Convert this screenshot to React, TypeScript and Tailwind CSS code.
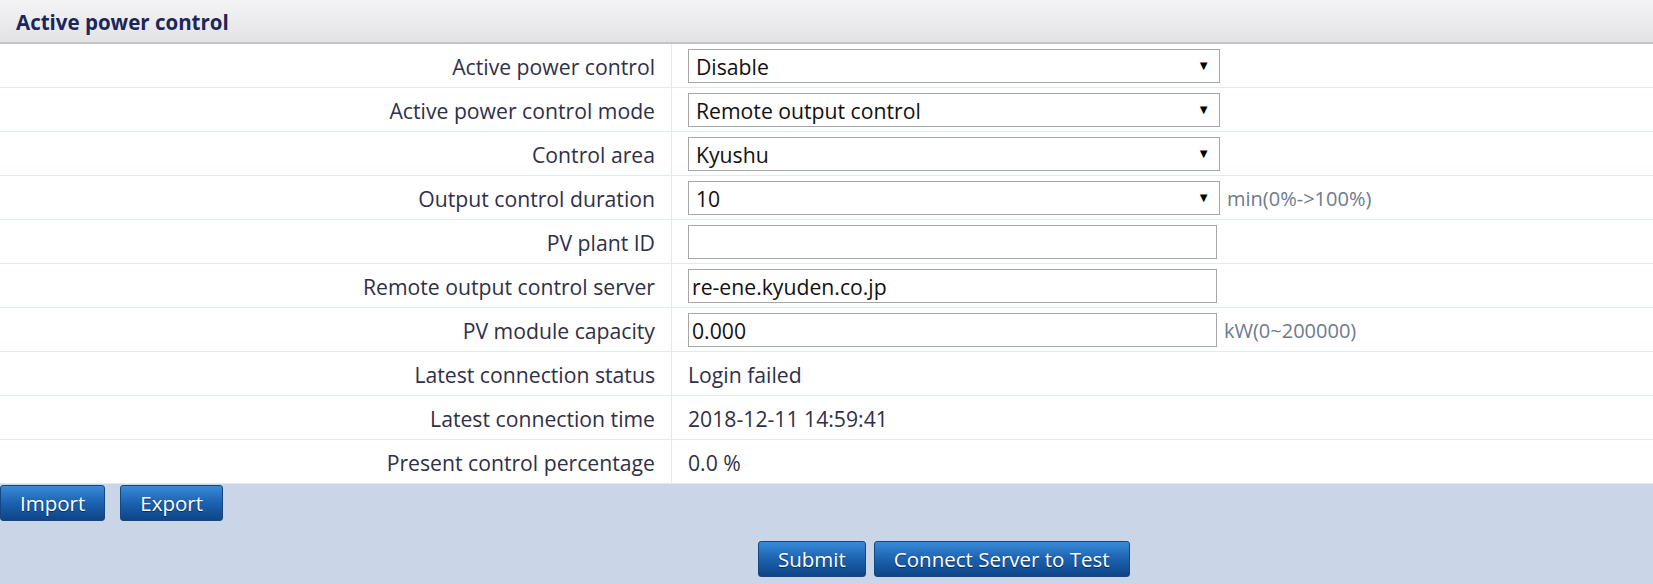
import React from 'react';

type Row = {
  label: string;
  kind: 'select' | 'input' | 'text';
  value: string;
  unit?: string;
};

const rows: Row[] = [
  { label: 'Active power control', kind: 'select', value: 'Disable' },
  { label: 'Active power control mode', kind: 'select', value: 'Remote output control' },
  { label: 'Control area', kind: 'select', value: 'Kyushu' },
  { label: 'Output control duration', kind: 'select', value: '10', unit: 'min(0%->100%)' },
  { label: 'PV plant ID', kind: 'input', value: '' },
  { label: 'Remote output control server', kind: 'input', value: 're-ene.kyuden.co.jp' },
  { label: 'PV module capacity', kind: 'input', value: '0.000', unit: 'kW(0~200000)' },
  { label: 'Latest connection status', kind: 'text', value: 'Login failed' },
  { label: 'Latest connection time', kind: 'text', value: '2018-12-11 14:59:41' },
  { label: 'Present control percentage', kind: 'text', value: '0.0 %' },
];

const font = { fontFamily: '"Open Sans", "Noto Sans", Arial, sans-serif' };

function BlueButton({ children }: { children: React.ReactNode }) {
  return (
    <button className="h-[36px] px-[19px] rounded-[3px] border border-[#15467f] bg-gradient-to-b from-[#3a8ad8] via-[#1c62b0] to-[#0e4586] text-white text-[20.5px] leading-none [text-shadow:0_1px_1px_rgba(0,0,0,0.5)]">
      {children}
    </button>
  );
}

function Field({ row }: { row: Row }) {
  if (row.kind === 'select') {
    return (
      <div className="flex items-center w-[532px] h-[34px] border border-[#a6a6a6] bg-white pl-[7px] pr-[9px] text-[21.2px] text-[#111]">
        <span className="flex-1 pt-[3px]">{row.value}</span>
        <span className="text-[13px] text-black">▼</span>
      </div>
    );
  }
  if (row.kind === 'input') {
    return (
      <div className="flex items-center w-[529px] h-[34px] border border-[#a6a6a6] bg-white pl-[3px] pt-[3px] text-[21.2px] text-[#111]">
        {row.value}
      </div>
    );
  }
  return <span className="pt-[3px] text-[21.2px] text-[#2f3049]">{row.value}</span>;
}

export default function App() {
  return (
    <div className="w-[1653px] h-[584px] flex flex-col bg-[#cbd5e8] overflow-hidden" style={font}>
      <div className="h-[44px] shrink-0 flex items-center pl-4 pt-[3px] bg-gradient-to-b from-[#f4f4f6] to-[#e3e3e6] border-b-2 border-[#c4c4c6]">
        <span className="text-[20.5px] font-bold text-[#1c2659]">Active power control</span>
      </div>

      <div className="bg-white">
        {rows.map((row) => (
          <div key={row.label} className="flex h-[44px] border-b border-[#e2eaea]">
            <div className="w-[672px] shrink-0 flex items-center justify-end pr-[16px] pt-[3px] border-r border-[#e2eaea] text-[21.2px] text-[#2f3049]">
              {row.label}
            </div>
            <div className="flex-1 flex items-center pl-4 gap-[7px]">
              <Field row={row} />
              {row.unit && <span className="pt-[3px] text-[20px] text-[#6d7b8c]">{row.unit}</span>}
            </div>
          </div>
        ))}
      </div>

      <div className="flex gap-[15px] pt-[1px]">
        <BlueButton>Import</BlueButton>
        <BlueButton>Export</BlueButton>
      </div>

      <div className="flex gap-[8px] pl-[758px] pt-[20px]">
        <BlueButton>Submit</BlueButton>
        <BlueButton>Connect Server to Test</BlueButton>
      </div>
    </div>
  );
}
